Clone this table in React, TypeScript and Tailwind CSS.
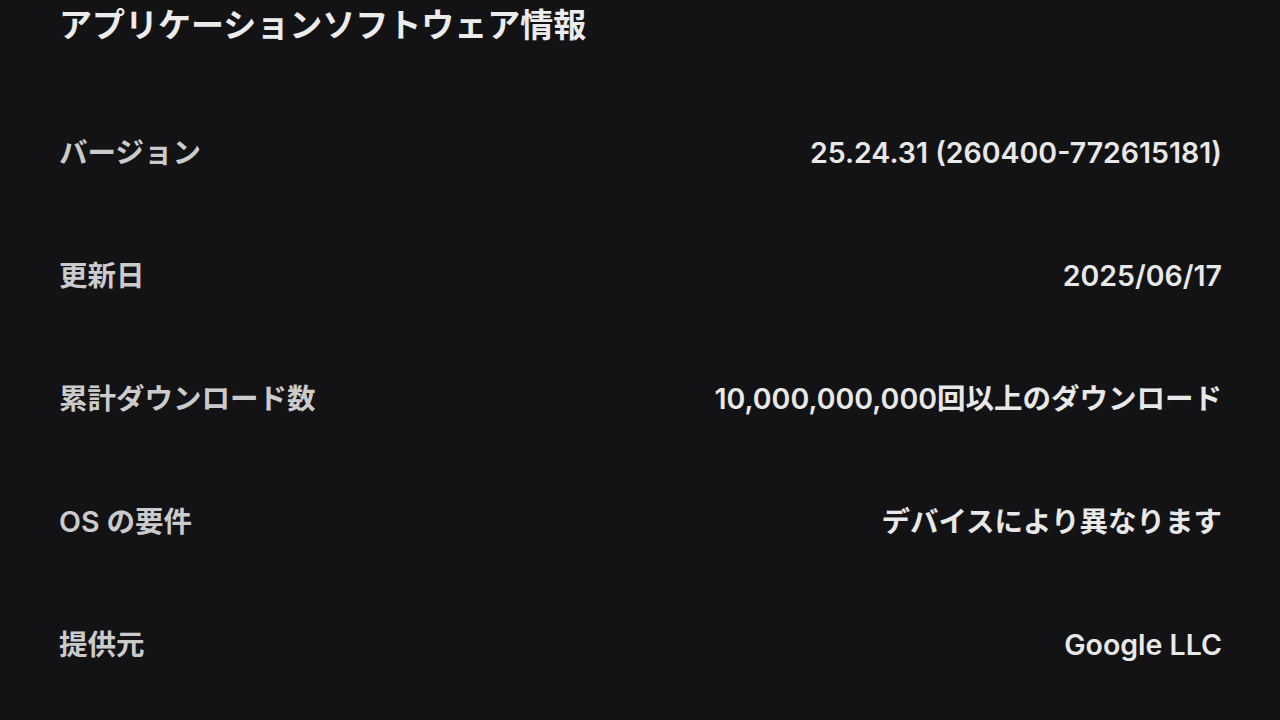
import React from "react";

const rows: [string, string][] = [
  ["バージョン", "25.24.31 (260400-772615181)"],
  ["更新日", "2025/06/17"],
  ["累計ダウンロード数", "10,000,000,000回以上のダウンロード"],
  ["OS の要件", "デバイスにより異なります"],
  ["提供元", "Google LLC"],
];

export default function App() {
  return (
    <div
      className="w-[1280px] h-[720px] overflow-hidden bg-[#131315] pl-[59px] pr-[58px]"
      style={{ fontFamily: 'Inter, "Noto Sans CJK JP", sans-serif' }}
    >
      <div className="h-[52px] flex items-center text-[33px] font-semibold text-[#ececec]">
        アプリケーションソフトウェア情報
      </div>
      <div className="mt-[40px] flex flex-col">
        {rows.map(([k, v]) => (
          <div key={k} className="h-[123px] flex items-center justify-between text-[28.5px] font-semibold">
            <span className="text-[#cbcbcb]">{k}</span>
            <span className="text-[#e8e8e8]">{v}</span>
          </div>
        ))}
      </div>
    </div>
  );
}
